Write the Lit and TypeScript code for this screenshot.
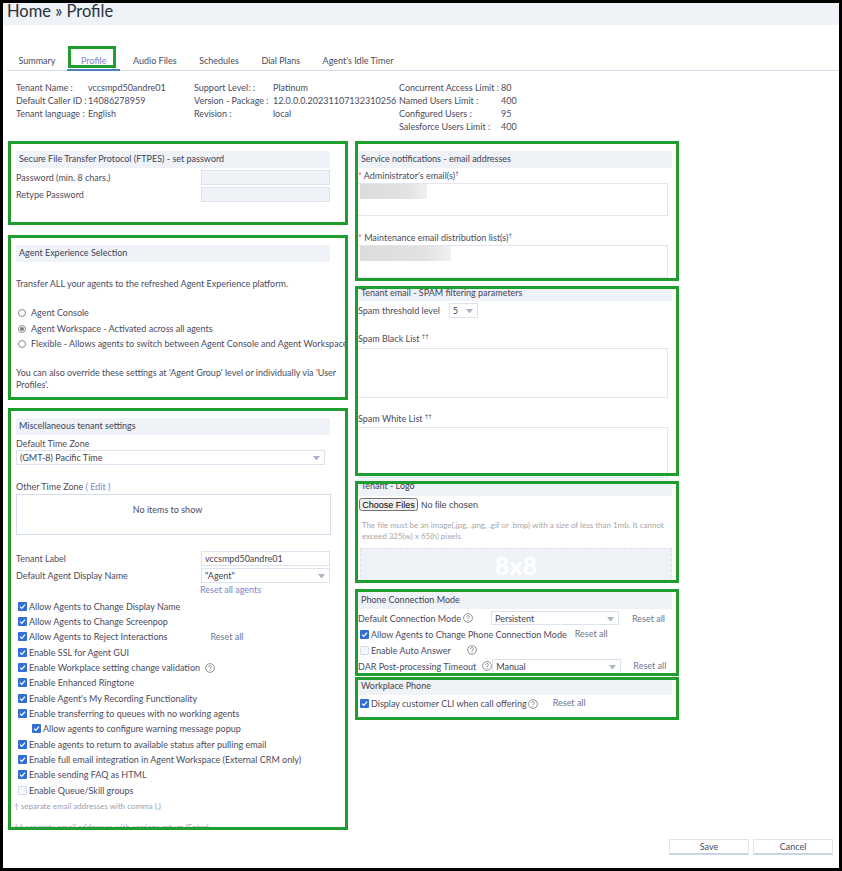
import { LitElement, html, css, nothing } from 'lit';
import { customElement } from 'lit/decorators.js';

const TABS = ['Summary', 'Profile', 'Audio Files', 'Schedules', 'Dial Plans', "Agent's Idle Timer"];

const INFO = [
  {
    cls: 'c1',
    rows: [
      ['Tenant Name :', 'vccsmpd50andre01'],
      ['Default Caller ID :', '14086278959'],
      ['Tenant language :', 'English'],
    ],
  },
  {
    cls: 'c2',
    rows: [
      ['Support Level: :', 'Platinum'],
      ['Version - Package :', '12.0.0.0.20231107132310256'],
      ['Revision :', 'local'],
    ],
  },
  {
    cls: 'c3',
    rows: [
      ['Concurrent Access Limit :', '80'],
      ['Named Users Limit :', '400'],
      ['Configured Users :', '95'],
      ['Salesforce Users Limit :', '400'],
    ],
  },
];

const CHECKS = [
  { text: 'Allow Agents to Change Display Name', on: true },
  { text: 'Allow Agents to Change Screenpop', on: true },
  { text: 'Allow Agents to Reject Interactions', on: true, reset: true },
  { text: 'Enable SSL for Agent GUI', on: true },
  { text: 'Enable Workplace setting change validation', on: true, help: true },
  { text: 'Enable Enhanced Ringtone', on: true },
  { text: "Enable Agent's My Recording Functionality", on: true },
  { text: 'Enable transferring to queues with no working agents', on: true },
  { text: 'Allow agents to configure warning message popup', on: true, sub: true },
  { text: 'Enable agents to return to available status after pulling email', on: true },
  { text: 'Enable full email integration in Agent Workspace (External CRM only)', on: true },
  { text: 'Enable sending FAQ as HTML', on: true },
  { text: 'Enable Queue/Skill groups', on: false },
];

@customElement('app-root')
export class AppRoot extends LitElement {
  static styles = css`
    :host {
      display: block;
      box-sizing: border-box;
      width: 842px;
      height: 871px;
      border: 3px solid #000;
      background: #fff;
      color: #4b4b5c;
      font: 9px/13px Lato, sans-serif;
      overflow: hidden;
    }
    *,
    *::after {
      box-sizing: border-box;
    }
    .title {
      height: 22px;
      background: #eff2f7;
      color: #2a2f3a;
      font-size: 16.5px;
      line-height: 17px;
      padding-left: 4px;
    }
    .tabs {
      display: flex;
      align-items: flex-start;
      height: 25px;
      margin: 21px 0 0 4px;
      border-bottom: 1px solid #d5dcea;
    }
    .tab {
      position: relative;
      height: 25px;
      padding: 8px 11.5px 0;
    }
    .tab:nth-child(n + 3) {
      padding: 8px 11px 0 11.5px;
    }
    .tab.active {
      padding: 8px 13px 0 14px;
      margin-right: 1.5px;
      width: 53px;
      color: #7d86c9;
      border-bottom: 2px solid #4a7fc4;
    }
    .tab.active::after {
      content: '';
      position: absolute;
      left: 1px;
      top: 0;
      width: 48px;
      height: 22px;
      border: 3px solid #1f9e2f;
    }
    .info {
      display: flex;
      margin: 10px 0 0 13px;
      height: 60px;
    }
    .info > div {
      display: grid;
      align-content: start;
      grid-auto-rows: 13px;
      white-space: nowrap;
    }
    .info .c1 {
      width: 178px;
      grid-template-columns: 72px 1fr;
    }
    .info .c2 {
      width: 205px;
      grid-template-columns: 79px 1fr;
    }
    .info .c3 {
      grid-template-columns: 102px 1fr;
    }
    .cols {
      display: grid;
      grid-template-columns: 340px 324px;
      gap: 7px;
      margin-left: 5px;
      align-items: start;
    }
    .stack {
      display: flex;
      flex-direction: column;
    }
    .box {
      position: relative;
    }
    .box::after {
      content: '';
      position: absolute;
      inset: 0;
      border: 3px solid #1f9e2f;
      pointer-events: none;
    }
    .left .box {
      padding: 10px 18px 0 8px;
    }
    .right .box {
      padding: 10px 7px 0 3px;
    }
    .head {
      height: 17px;
      padding-left: 3px;
      background: #eff2f7;
      color: #3f4252;
      line-height: 16px;
    }
    .ftp {
      height: 84px;
      margin-bottom: 10px;
    }
    .exp {
      height: 165px;
      margin-bottom: 8px;
    }
    .misc {
      height: 422px;
      overflow: hidden;
    }
    .row {
      display: flex;
      align-items: center;
    }
    .form-row {
      display: grid;
      grid-template-columns: 185px 129px;
      align-items: center;
      height: 15px;
      margin-top: 2px;
    }
    .form-row > span {
      margin-top: -1px;
    }
    .input {
      height: 15px;
      border: 1px solid #dde3ee;
      padding-left: 3px;
      line-height: 13px;
      background: #fff;
      color: #3f4252;
    }
    .input.filled {
      background: #eff2f7;
    }
    .select {
      position: relative;
      flex: none;
      height: 15px;
      border: 1px solid #dde3ee;
      padding-left: 3px;
      line-height: 13px;
      color: #3f4252;
      background: #fff;
    }
    .select::after {
      content: '';
      position: absolute;
      right: 4px;
      top: 5px;
      width: 7px;
      height: 4px;
      border: solid transparent;
      border-width: 4px 3.5px 0;
      border-top-color: #aab4c8;
    }
    .radio-text {
      margin-top: 15px;
    }
    .radios {
      margin-top: 15px;
    }
    .radio {
      height: 15.5px;
      white-space: nowrap;
    }
    .dot {
      flex: none;
      display: grid;
      place-items: center;
      width: 8px;
      height: 8px;
      margin: 1px 5px 0 2px;
      border: 1px solid #8a8a8a;
      border-radius: 50%;
    }
    .dot.on::before {
      content: '';
      width: 4px;
      height: 4px;
      border-radius: 50%;
      background: #7a7a7a;
    }
    .override {
      margin: 15px -6px 0 0;
      line-height: 12px;
    }
    .label {
      margin-top: 2px;
    }
    .tz {
      width: 309px;
    }
    .label.other {
      margin-top: 15px;
    }
    .link {
      color: #7d86c9;
    }
    .list {
      height: 41px;
      margin-top: 1px;
      width: 315px;
      border: 1px solid #d5dcea;
      padding: 8px 12px 0 0;
      text-align: center;
    }
    .form-row.tenant {
      margin-top: 16px;
    }
    .reset-agents {
      margin-left: 184px;
      line-height: 14px;
      color: #7d86c9;
    }
    .checks {
      margin-top: 1.5px;
    }
    .check {
      height: 15.35px;
      padding-left: 2px;
      white-space: nowrap;
    }
    .check.sub {
      padding-left: 16px;
    }
    .check .reset {
      margin-left: 43px;
    }
    .cb {
      flex: none;
      width: 9px;
      height: 9px;
      margin-right: 2px;
      border-radius: 1px;
      background: #2f6fd6;
      display: grid;
      place-items: center;
    }
    .cb.off {
      background: #f6f7fa;
      border: 1px solid #d5dcea;
    }
    .cb svg {
      display: block;
    }
    .help {
      display: block;
      flex: none;
      width: 10px;
      height: 10px;
    }
    .check .help {
      margin-left: 5px;
    }
    .reset {
      flex: none;
      color: #70768f;
    }
    .note {
      margin-left: -2px;
      font-size: 8px;
      color: #9aa0b4;
      line-height: 21px;
    }
    .notes {
      margin-top: -2px;
    }
    .area {
      border: 1px solid #e0e5ef;
      border-left: 0;
      width: 310px;
      background: #fff;
    }
    .mail {
      height: 140px;
      margin-bottom: 5px;
    }
    .mail .area {
      position: relative;
      height: 33px;
      margin-top: 1px;
    }
    .mail .first {
      margin-top: 1px;
    }
    .mail .second {
      margin-top: 15px;
    }
    .star {
      color: #d9534f;
    }
    sup {
      font-size: 6px;
      line-height: 0;
    }
    .blur {
      position: absolute;
      left: 2px;
      top: 0;
      height: 15px;
      background: linear-gradient(90deg, #dcdcdc, #e2e2e2 70%, #f0f0f0);
    }
    .spam {
      height: 190px;
      margin-bottom: 5px;
    }
    .spam .head {
      height: 15px;
      line-height: 13px;
    }
    .right .spam {
      padding-top: 0;
    }
    .threshold {
      margin-top: 2px;
      height: 15px;
    }
    .threshold .select {
      width: 29px;
      margin-left: 9px;
    }
    .spam .black {
      margin-top: 14px;
    }
    .spam .white {
      margin-top: 14px;
    }
    .spam .area {
      height: 50px;
      margin-top: 3px;
    }
    .spam .white-area {
      height: 51px;
      margin-top: 2px;
    }
    .logo {
      height: 102px;
      margin-bottom: 6px;
    }
    .right .logo {
      padding-top: 0;
    }
    .logo .head {
      height: 17px;
      line-height: 14px;
      margin-top: -2px;
    }
    .logo input {
      display: block;
      margin: 2px 0 0 1px;
      font: 9px 'Liberation Sans', sans-serif;
      color: #3f4252;
      width: 200px;
    }
    .logo input::file-selector-button {
      width: 59px;
      height: 13px;
      padding: 0;
      margin-right: 3px;
    }
    .hint {
      margin: 9px 0 0 4px;
      font-size: 8px;
      line-height: 11px;
      color: #a9a6a6;
    }
    .dropzone {
      display: grid;
      place-items: center;
      height: 35px;
      margin: 6px 0 0 2px;
      border: 1px dashed #dcdfe6;
      background: #eff2f7;
      color: #fff;
      font-size: 25px;
      font-weight: 900;
      line-height: 1;
    }
    .phone {
      height: 87px;
      margin-bottom: 1px;
    }
    .right .phone {
      padding-top: 1px;
    }
    .phone .head {
      height: 19px;
      line-height: 19px;
    }
    .right .work {
      height: 43px;
      padding-top: 2px;
    }
    .work .head {
      height: 16px;
      line-height: 14px;
    }
    .mode {
      height: 14px;
      margin-top: 2px;
      white-space: nowrap;
    }
    .mode .help {
      margin-left: 2px;
    }
    .mode .select {
      width: 128px;
      height: 14px;
      margin-left: 18px;
    }
    .mode .reset {
      margin-left: 13px;
    }
    .line {
      height: 15px;
      margin-top: 2px;
      padding-left: 2px;
      white-space: nowrap;
    }
    .line .reset {
      margin-left: 8px;
      margin-top: -3px;
    }
    .auto {
      margin-top: 0;
      height: 16px;
    }
    .auto .help {
      margin-left: 16px;
    }
    .dar {
      height: 14px;
      margin-top: 1px;
      white-space: nowrap;
    }
    .dar .help {
      margin-left: 6px;
    }
    .dar .select {
      width: 129px;
      margin-left: 0;
      height: 15px;
      border-bottom: 0;
    }
    .dar .reset {
      margin-left: 12px;
      margin-top: -2px;
    }
    .work .line {
      margin-top: 1px;
    }
    .work .help {
      margin-left: 1px;
    }
    .work .reset {
      margin-left: 15px;
      margin-top: -2px;
    }
    .footer {
      display: flex;
      justify-content: flex-end;
      gap: 4px;
      margin: 9px 6px 0 0;
    }
    .footer button {
      width: 80px;
      height: 16px;
      padding: 0;
      border: 1px solid #dfe4ee;
      border-bottom: 2px solid #c8d3e6;
      border-radius: 1px;
      background: #fff;
      color: #4b4b5c;
      font: inherit;
      line-height: 13px;
    }
  `;

  private check(on: boolean) {
    if (!on) return html`<span class="cb off"></span>`;
    return html`<span class="cb"
      ><svg width="7" height="7" viewBox="0 0 7 7">
        <path d="M1 3.6 2.8 5.4 6 1.6" fill="none" stroke="#fff" stroke-width="1.3" />
      </svg></span
    >`;
  }

  private help() {
    return html`<svg class="help" viewBox="0 0 10 10">
      <circle cx="5" cy="5" r="4.4" fill="none" stroke="#77797f" stroke-width=".8" />
      <path d="M3.6 3.9C3.7 2 6.5 2.2 6.4 3.9 6.3 5 5 4.9 5 6.1" fill="none" stroke="#77797f" stroke-width=".8" />
      <circle cx="5" cy="7.5" r=".55" fill="#77797f" />
    </svg>`;
  }

  render() {
    return html`
      <div class="title">Home » Profile</div>
      <div class="tabs">
        ${TABS.map((t) => html`<div class="tab ${t === 'Profile' ? 'active' : ''}">${t}</div>`)}
      </div>
      <div class="info">
        ${INFO.map(
          (col) => html`<div class=${col.cls}>
            ${col.rows.map((r) => html`<span>${r[0]}</span><span>${r[1]}</span>`)}
          </div>`,
        )}
      </div>
      <div class="cols">
        <div class="stack left">
          <section class="box ftp">
            <div class="head">Secure File Transfer Protocol (FTPES) - set password</div>
            <div class="form-row"><span>Password (min. 8 chars.)</span><div class="input filled"></div></div>
            <div class="form-row"><span>Retype Password</span><div class="input filled"></div></div>
          </section>
          <section class="box exp">
            <div class="head">Agent Experience Selection</div>
            <div class="radio-text">Transfer ALL your agents to the refreshed Agent Experience platform.</div>
            <div class="radios">
              <div class="row radio"><span class="dot"></span>Agent Console</div>
              <div class="row radio"><span class="dot on"></span>Agent Workspace - Activated across all agents</div>
              <div class="row radio">
                <span class="dot"></span>Flexible - Allows agents to switch between Agent Console and Agent Workspace
              </div>
            </div>
            <div class="override">
              You can also override these settings at 'Agent Group' level or individually via 'User Profiles'.
            </div>
          </section>
          <section class="box misc">
            <div class="head">Miscellaneous tenant settings</div>
            <div class="label">Default Time Zone</div>
            <div class="select tz">(GMT-8) Pacific Time</div>
            <div class="label other">Other Time Zone <span class="link">( Edit )</span></div>
            <div class="list">No items to show</div>
            <div class="form-row tenant"><span>Tenant Label</span><div class="input">vccsmpd50andre01</div></div>
            <div class="form-row"><span>Default Agent Display Name</span><div class="select">"Agent"</div></div>
            <div class="reset-agents">Reset all agents</div>
            <div class="checks">
              ${CHECKS.map(
                (c) => html`<div class="row check ${c.sub ? 'sub' : ''}">
                  ${this.check(c.on)}<span>${c.text}</span>
                  ${c.help ? this.help() : nothing}
                  ${c.reset ? html`<span class="reset">Reset all</span>` : nothing}
                </div>`,
              )}
            </div>
            <div class="notes">
              <div class="note">† separate email addresses with comma (,)</div>
              <div class="note">†† separate email addresses with carriage return (Enter)</div>
            </div>
          </section>
        </div>
        <div class="stack right">
          <section class="box mail">
            <div class="head">Service notifications - email addresses</div>
            <div class="first"><span class="star">*</span> Administrator's email(s)<sup>†</sup></div>
            <div class="area"><div class="blur" style="width: 67px"></div></div>
            <div class="second"><span class="star">*</span> Maintenance email distribution list(s)<sup>†</sup></div>
            <div class="area"><div class="blur" style="width: 91px"></div></div>
          </section>
          <section class="box spam">
            <div class="head">Tenant email - SPAM filtering parameters</div>
            <div class="row threshold">Spam threshold level<div class="select">5</div></div>
            <div class="black">Spam Black List <sup>††</sup></div>
            <div class="area"></div>
            <div class="white">Spam White List <sup>††</sup></div>
            <div class="area white-area"></div>
          </section>
          <section class="box logo">
            <div class="head">Tenant - Logo</div>
            <input type="file" multiple />
            <div class="hint">
              The file must be an image(.jpg, .png, .gif or .bmp) with a size of less than 1mb. It cannot exceed
              325(w) x 65(h) pixels.
            </div>
            <div class="dropzone">8x8</div>
          </section>
          <section class="box phone">
            <div class="head">Phone Connection Mode</div>
            <div class="row mode">
              Default Connection Mode ${this.help()}
              <div class="select">Persistent</div>
              <span class="reset">Reset all</span>
            </div>
            <div class="row line">
              ${this.check(true)}Allow Agents to Change Phone Connection Mode
              <span class="reset">Reset all</span>
            </div>
            <div class="row line auto">${this.check(false)}Enable Auto Answer ${this.help()}</div>
            <div class="row dar">
              DAR Post-processing Timeout ${this.help()}
              <div class="select">Manual</div>
              <span class="reset">Reset all</span>
            </div>
          </section>
          <section class="box work">
            <div class="head">Workplace Phone</div>
            <div class="row line">
              ${this.check(true)}Display customer CLI when call offering ${this.help()}
              <span class="reset">Reset all</span>
            </div>
          </section>
        </div>
      </div>
      <div class="footer"><button>Save</button><button>Cancel</button></div>
    `;
  }
}
